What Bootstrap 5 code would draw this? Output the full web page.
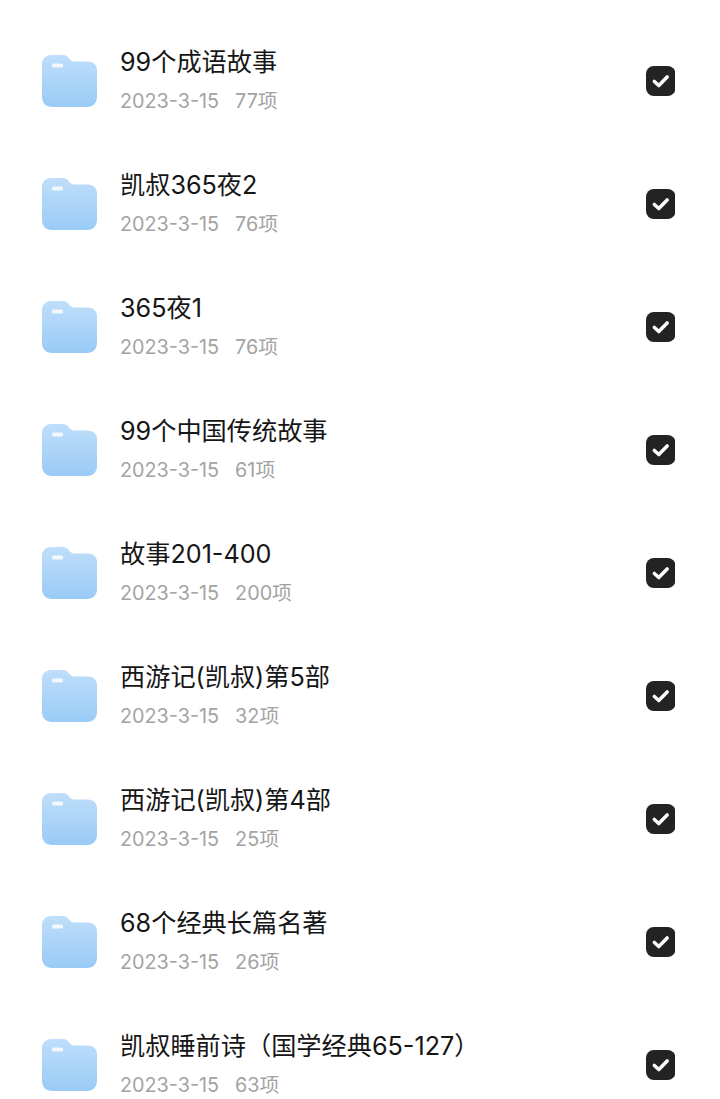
<!DOCTYPE html>
<html lang="zh-CN">
<head>
    <meta charset="UTF-8">
    <meta name="viewport" content="width=device-width, initial-scale=1.0">
    <title>文件夹</title>
    <link href="https://cdn.jsdelivr.net/npm/bootstrap@5.3.0/dist/css/bootstrap.min.css" rel="stylesheet">
    <style>
        html, body { height: 1099px; overflow: hidden; }
        body { background: #fff; font-family: Inter, "Noto Sans CJK SC", sans-serif; }
        .file-list { padding-top: 18px; }
        .file-row { height: 123px; padding: 0 45px 0 42px; border: 0; gap: 23px; }
        .folder-icon { width: 55px; height: 53px; flex: none; margin-top: 1px; }
        .file-name { font-size: 25.2px; line-height: 34px; color: #161616; margin-bottom: 9px; white-space: nowrap; }
        .file-meta { font-size: 19.8px; line-height: 26px; color: #a3a3a3; gap: 16px; }
        .file-check { width: 29.5px; height: 30px; flex: none; margin-top: 2px; }
    </style>
</head>
<body>

    <div class="list-group list-group-flush file-list" id="fileList"></div>

    <script>
        var files = [
            ["99个成语故事", "77项"],
            ["凯叔365夜2", "76项"],
            ["365夜1", "76项"],
            ["99个中国传统故事", "61项"],
            ["故事201-400", "200项"],
            ["西游记(凯叔)第5部", "32项"],
            ["西游记(凯叔)第4部", "25项"],
            ["68个经典长篇名著", "26项"],
            ["凯叔睡前诗（国学经典65-127）", "63项"]
        ];

        var html = "";
        files.forEach(function (f, i) {
            html += '<div class="list-group-item file-row d-flex align-items-center">'
                + '<svg class="folder-icon" viewBox="0 0 55 53"><defs><linearGradient id="fg' + i + '" x1="0" y1="0" x2="0" y2="1"><stop offset="0" stop-color="#bfdefa"/><stop offset="1" stop-color="#99cbf6"/></linearGradient></defs>'
                + '<path d="M9 1H21C24 1 25.500 2.500 27 4.500C28.500 6.500 30 7.500 33 7.500H46C51 7.500 55 11 55 16V43C55 49 51 53 45 53H10C4 53 0 49 0 43V10C0 4.500 4 1 9 1Z" fill="url(#fg' + i + ')"/>'
                + '<rect x="10" y="9.500" width="11" height="4" rx="1.500" fill="#f2f9fe"/></svg>'
                + '<div class="flex-grow-1">'
                + '<div class="file-name">' + f[0] + '</div>'
                + '<div class="file-meta d-flex"><span>2023-3-15</span><span>' + f[1] + '</span></div>'
                + '</div>'
                + '<svg class="file-check" viewBox="0 0 30 30" preserveAspectRatio="none"><rect width="30" height="30" rx="8" fill="#232323"/>'
                + '<path d="M8.500 15.500L13 19.500L21.500 11" fill="none" stroke="#fff" stroke-width="3.600" stroke-linecap="round" stroke-linejoin="round"/></svg>'
                + '</div>';
        });
        document.getElementById("fileList").innerHTML = html;
    </script>

    <script src="https://cdn.jsdelivr.net/npm/bootstrap@5.3.0/dist/js/bootstrap.bundle.min.js"></script>
</body>
</html>
